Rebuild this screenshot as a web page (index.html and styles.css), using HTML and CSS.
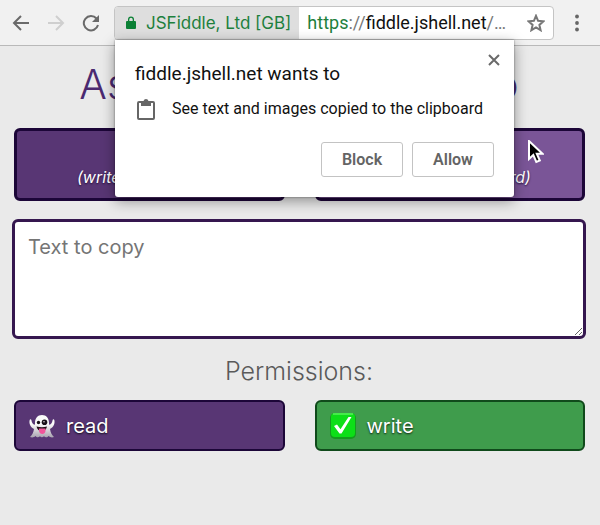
FILE: index.html
```html
<!DOCTYPE html>
<html lang="en">
<head>
<meta charset="utf-8">
<title>Async Clipboard Demo</title>
<meta name="viewport" content="width=device-width, initial-scale=1">
<link rel="stylesheet" href="styles.css">
</head>
<body>
<header class="toolbar">
  <nav class="nav">
    <button class="icon-btn" type="button" aria-label="Back">
      <svg width="18" height="18" viewBox="0 0 18 18"><path d="M17 9H2M9 2L2 9l7 7"/></svg>
    </button>
    <button class="icon-btn icon-btn-off" type="button" aria-label="Forward" disabled>
      <svg width="18" height="18" viewBox="0 0 18 18"><path d="M1 9h15M9 2l7 7-7 7"/></svg>
    </button>
    <button class="icon-btn" type="button" aria-label="Reload">
      <svg width="18" height="18" viewBox="0 0 18 18"><path d="M16 11a7.200 7.200 0 1 1-1.500-6.500L16 6.500"/><path class="solid" d="M17 1v7h-7z"/></svg>
    </button>
  </nav>
  <div class="address">
    <button class="identity" type="button">
      <svg width="10" height="14" viewBox="0 0 10 14"><path fill="#0b8035" fill-rule="evenodd" d="M1 5h1V3.500a3 3 0 0 1 6 0V5h1a1 1 0 0 1 1 1v6a1 1 0 0 1-1 1H1a1 1 0 0 1-1-1V6a1 1 0 0 1 1-1zm2.300 0h3.400V3.500a1.700 1.700 0 0 0-3.400 0z"/></svg>
      <span>JSFiddle, Ltd [GB]</span>
    </button>
    <div class="url"><span class="scheme">https</span><span class="dim">://</span>fiddle.jshell.net<span class="dim">/…</span></div>
    <button class="star" type="button" aria-label="Bookmark">
      <svg width="18" height="18" viewBox="0 0 18 18"><path d="M9 1.800l2.100 5 5.300.5-4 3.600 1.200 5.300L9 13.400l-4.600 2.800 1.200-5.300-4-3.600 5.300-.5z"/></svg>
    </button>
    <section class="prompt" role="dialog" aria-labelledby="prompt-title">
      <button class="close" type="button" aria-label="Close">
        <svg width="12" height="12" viewBox="0 0 12 12"><path d="M1 1l10 10M11 1L1 11"/></svg>
      </button>
      <h2 class="prompt-title" id="prompt-title">fiddle.jshell.net wants to</h2>
      <p class="prompt-row">
        <svg width="18" height="21" viewBox="0 0 18 21"><rect x="1" y="3" width="16" height="17" rx="1"/><path class="solid" fill-rule="evenodd" d="M4 2h2.500a2.600 2.600 0 0 1 5 0H14v5H4zm4.100.8a.9.9 0 1 0 1.800 0 .9.900 0 0 0-1.800 0z"/></svg>
        <span>See text and images copied to the clipboard</span>
      </p>
      <div class="prompt-actions">
        <button type="button">Block</button>
        <button type="button">Allow</button>
      </div>
    </section>
  </div>
  <button class="menu" type="button" aria-label="Menu">
    <svg width="4" height="18" viewBox="0 0 4 18"><circle cx="2" cy="2.500" r="1.900"/><circle cx="2" cy="9" r="1.900"/><circle cx="2" cy="15.500" r="1.900"/></svg>
  </button>
</header>
<main class="page">
  <h1 class="title">Async Clipboard Demo</h1>
  <div class="pair">
    <button class="action" type="button">Copy<em>(write to clipboard)</em></button>
    <button class="action action-hover" type="button">Paste<em>(read from clipboard)</em>
      <svg class="pointer" width="16" height="24" viewBox="0 0 16 24"><path d="M1 1v18l4.300-4 3 7 3.500-1.500-3-6.800H14.500z"/></svg>
    </button>
  </div>
  <textarea class="text" aria-label="Text to copy" placeholder="Text to copy"></textarea>
  <h2 class="subtitle">Permissions:</h2>
  <div class="pair">
    <div class="perm">
      <svg width="28" height="28" viewBox="0 0 28 28">
        <defs><linearGradient id="ghost" x2="0" y2="1"><stop offset=".4" stop-color="#fafafa"/><stop offset="1" stop-color="#a9a4b0"/></linearGradient></defs>
        <path fill="url(#ghost)" d="M14 3c4.500 0 7 3.500 7 8 0 1.200 0 1.800.5 1.800 1.600-.4 2.700-2 3-4.300.2-1.300 1.500-1.500 1.800-.5 1 3.500-1 7.500-4.300 9 .5 3.500 2 6.500 4 8-2 .8-4 .3-5.500-1-1 1.600-3.300 1.800-4.500.3-1.200 1.200-3 1.200-4 0-1.300 1.500-3.500 1.300-4.500-.3C6 25.500 4 25.800 2 25c2-1.500 3.500-4.500 4-8-3.300-1.500-5.300-5.500-4.300-9 .3-1 1.600-.8 1.800.5.3 2.300 1.400 3.900 3 4.300.5 0 .5-.6.5-1.800 0-4.500 2.500-8 7-8z"/>
        <circle cx="10.500" cy="10.500" r="1.700" fill="#181018"/><circle cx="16.500" cy="10.300" r="2.800" fill="#181018"/><circle cx="16" cy="9.800" r=".7" fill="#fff"/>
        <path fill="#251019" d="M8.500 14.500q5.500 1.500 10.500 0-1 4.500-5.200 4.500t-5.300-4.500z"/><path fill="#f0569b" d="M11 16.500h6.500V19q-.5 3-3.200 3T11 19z"/>
      </svg>
      <span>read</span>
    </div>
    <div class="perm perm-granted">
      <svg width="28" height="28" viewBox="0 0 28 28">
        <rect x="1" y="1" width="26" height="26" rx="5" fill="#159c1e"/><rect x="2" y="1" width="24" height="24" rx="4" fill="#0ddf18"/><path fill="none" stroke="#7cf97b" d="M4 2h20"/>
        <path fill="#fff" d="M5 14l3-1.500 3.500 4.700L19.500 5h3L12.500 21.500h-2z"/>
      </svg>
      <span>write</span>
    </div>
  </div>
</main>
</body>
</html>
```
FILE: styles.css
```css
* { box-sizing: border-box; }
body {
  margin: 0;
  min-height: 100vh;
  background: #eaeaea;
  color: #111;
  font-family: Inter, "Liberation Sans", sans-serif;
}
button {
  margin: 0;
  padding: 0;
  border: 0;
  background: none;
  color: inherit;
  font: inherit;
}
svg { display: block; flex: none; }
h1, h2, p { margin: 0; font-weight: 400; }

.toolbar {
  display: flex;
  align-items: center;
  height: 46px;
  border-bottom: 1px solid #b9b9b9;
  background: #f1f1f1;
  font-family: Roboto, "Liberation Sans", sans-serif;
}
.nav {
  display: flex;
  gap: 17px;
  padding: 0 14px 0 12px;
}
.icon-btn svg, .star svg, .close svg {
  fill: none;
  stroke: #6a6a6a;
  stroke-width: 2;
}
.icon-btn-off svg { stroke: #cfcfcf; }
.icon-btn .solid { fill: #6a6a6a; stroke: none; }
.star svg { stroke: #777; }
.address {
  position: relative;
  display: flex;
  flex: 1;
  height: 34px;
  border: 1px solid #c4c4c4;
  border-radius: 4px;
  background: #fff;
  font-size: 18px;
}
.identity {
  display: flex;
  align-items: center;
  gap: 10px;
  padding: 0 8px 0 11px;
  border-radius: 3px 0 0 3px;
  background: #dedede;
  color: #1d803d;
  font-family: Inter, "Liberation Sans", sans-serif;
  font-size: 17px;
  white-space: nowrap;
}
.url {
  flex: 1;
  padding-left: 8px;
  line-height: 32px;
  color: #111;
  white-space: nowrap;
}
.scheme { color: #1d803d; }
.dim { color: #777; }
.star { padding: 0 8px; }
.menu { padding: 0 21px; }
.menu svg { fill: #666; }

.prompt {
  position: absolute;
  top: 33px;
  left: 0;
  z-index: 2;
  width: 399px;
  padding: 22px 20px 20px;
  border-radius: 0 0 3px 3px;
  background: #fff;
  box-shadow: 0 4px 14px rgba(0, 0, 0, .4), 0 0 2px rgba(0, 0, 0, .5);
}
.close {
  position: absolute;
  top: 14px;
  right: 14px;
}
.prompt-title {
  font-size: 19px;
  line-height: 24px;
}
.prompt-row {
  display: flex;
  align-items: center;
  gap: 17px;
  margin: 13px 0 22px 2px;
  font-size: 16px;
  line-height: 20px;
  white-space: nowrap;
}
.prompt-row svg { fill: none; stroke: #666; stroke-width: 2; }
.prompt-row .solid { fill: #666; stroke: none; }
.prompt-actions {
  display: flex;
  justify-content: flex-end;
  gap: 9px;
}
.prompt-actions button {
  width: 82px;
  height: 35px;
  border: 1px solid #c3c3c3;
  border-radius: 3px;
  color: #646464;
  font-size: 16px;
  font-weight: 600;
}

.page { padding: 14px 14px 14px 12px; }
.title {
  color: #4b2a70;
  font-size: 41px;
  font-weight: 300;
  line-height: 48px;
  text-align: center;
}
.pair {
  display: grid;
  grid-template-columns: 1fr 1fr;
  gap: 30px;
  padding: 0 1px 0 2px;
}
.title + .pair { margin-top: 20px; }
.action {
  position: relative;
  height: 73px;
  border: 3px solid #1c0638;
  border-radius: 6px;
  background: #583674;
  color: #fff;
  font-size: 20px;
  line-height: 24px;
  text-shadow: 0 1px 2px #200a38;
}
.action em {
  display: block;
  font-size: 16px;
  line-height: 24px;
}
.action-hover { background: #7a5597; }
.pointer {
  position: absolute;
  top: 9px;
  right: 38px;
  fill: #000;
  stroke: #fff;
  stroke-width: 2;
}
.text {
  display: block;
  width: 100%;
  height: 120px;
  margin-top: 18px;
  padding: 12px 13px;
  border: 3px solid #35174f;
  border-radius: 6px;
  background: #fff;
  color: #222;
  font: 20px/26px Inter, "Liberation Sans", sans-serif;
}
.text::placeholder { color: #757575; }
.subtitle {
  margin: 16px 0 13px;
  color: #5a5a5a;
  font-size: 25px;
  font-weight: 300;
  line-height: 32px;
  text-align: center;
}
.perm {
  display: flex;
  align-items: center;
  gap: 10px;
  height: 51px;
  padding: 0 12px;
  border: 2px solid #1c0638;
  border-radius: 6px;
  background: #583674;
  color: #fff;
  font-size: 20px;
  text-shadow: 0 1px 2px rgba(0, 0, 0, .8);
}
.perm-granted {
  border-color: #104a1b;
  background: #3f9c4c;
}
```
